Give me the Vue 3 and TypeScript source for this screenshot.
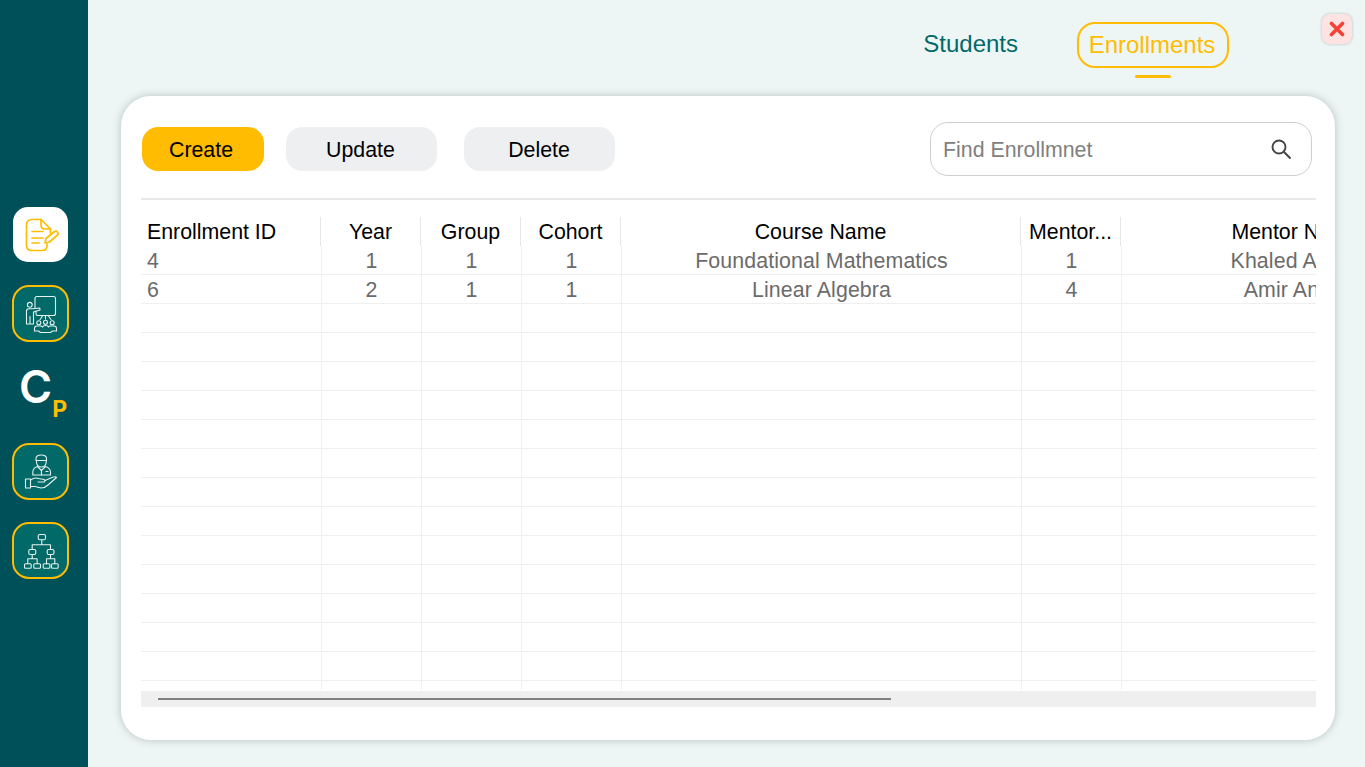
<script setup lang="ts">
interface Column {
  label: string
  width: number
  start?: boolean
}

const columns: Column[] = [
  { label: 'Enrollment ID', width: 180, start: true },
  { label: 'Year', width: 100 },
  { label: 'Group', width: 100 },
  { label: 'Cohort', width: 100 },
  { label: 'Course Name', width: 400 },
  { label: 'Mentor...', width: 100 },
  { label: 'Mentor Name', width: 350 }
]

const enrollments: string[][] = [
  ['4', '1', '1', '1', 'Foundational Mathematics', '1', 'Khaled Anwar'],
  ['6', '2', '1', '1', 'Linear Algebra', '4', 'Amir Anbar']
]

// the grid shows empty lines under the data, the last one cut off
const rows: string[][] = [
  ...enrollments,
  ...Array.from({ length: 14 }, () => columns.map(() => ''))
]
</script>

<template>
  <div class="page">
    <aside class="sidebar">
      <button type="button" class="side-btn side-btn--active">
        <svg class="side-icon" viewBox="0 0 40 40" fill="none" stroke="#ffbc00" stroke-width="1.7" stroke-linecap="round" stroke-linejoin="round">
          <path d="M20 4.500H11Q5.500 4.500 5.500 10V30.500Q5.500 35.500 11 35.500H21Q26 35.500 26 31V29" />
          <path d="M20 4.500L29.500 14V18.500" />
          <path d="M20 4.500V10Q20 14 24 14H29.500" />
          <path d="M11 16.500H22M11 23H22M11 28H18" />
          <path d="M24 28L25 23.500L33.500 16.500Q35 15.500 36.500 17Q37.800 18.500 36.500 20L28.500 27Z" />
        </svg>
      </button>
      <button type="button" class="side-btn">
        <svg class="side-icon" viewBox="0 0 40 40" fill="none" stroke="#e6f2f0" stroke-width="1.1" stroke-linecap="round" stroke-linejoin="round">
          <path d="M14 13.500V4.500Q14 2.500 16 2.500H32.500Q34.500 2.500 34.500 4.500V19.500Q34.500 21.500 32.500 21.500H16.500Q15 21.500 15 19.500V17" />
          <circle cx="8.800" cy="10.800" r="2.400" />
          <path d="M5.500 30V17Q5.500 14.800 7.800 14.800H11.500L18.800 14L19 16L12.500 18V30H9V22.500V30H5.500" />
          <path d="M24.500 22V25M21.500 22L19 25.500M27.500 22L30 25.500" />
          <circle cx="17.800" cy="28.800" r="2" />
          <circle cx="24.500" cy="28.200" r="2" />
          <circle cx="31.200" cy="28.800" r="2" />
          <path d="M13.500 37V34.500Q13.500 32 16 32H19.500Q21 32 21.500 33Q22 31.500 24.500 31.500Q27 31.500 27.500 33Q28 32 29.500 32H33Q35.500 32 35.500 34.500V37H31.500L29.500 38.500H19.500L17.500 37Z" />
        </svg>
      </button>
      <div class="logo">
        <span class="logo__c">C</span>
        <span class="logo__p">P</span>
      </div>
      <button type="button" class="side-btn">
        <svg class="side-icon" viewBox="0 0 40 40" fill="none" stroke="#e6f2f0" stroke-width="1.1" stroke-linecap="round" stroke-linejoin="round">
          <path d="M15 7Q14.800 3 20.200 3Q25.800 3 25.500 7V8.500H15Z" />
          <path d="M15.500 8.500V10.500Q16.200 15 20.400 15Q24.500 15 25.200 10.500V8.500" />
          <path d="M16.500 14.500Q11.800 16 11.800 20.500V23H29.500V20.500Q29.500 16 24.500 14.500L20.400 18.500Z" />
          <path d="M20.400 18.500V23M25 19.500H27" />
          <path d="M4.500 27H9.500V36H4.500Z" />
          <path d="M9.500 28Q14 25 17.500 26.500L23 27.500Q25 28.500 23 30H17" />
          <path d="M24 28.500L31 25.500Q34.500 24 35.500 25.500L27 33Q24 36 20 36L14 34.500H9.500" />
        </svg>
      </button>
      <button type="button" class="side-btn side-btn--last">
        <svg class="side-icon" viewBox="0 0 40 40" fill="none" stroke="#e6f2f0" stroke-width="1.1" stroke-linecap="round" stroke-linejoin="round">
          <rect x="17.200" y="3.500" width="7.300" height="5.300" rx="1.500" />
          <rect x="7.800" y="18.500" width="7" height="5" rx="1.500" />
          <rect x="26.200" y="18.500" width="6.800" height="5" rx="1.500" />
          <rect x="3.500" y="32.800" width="6.700" height="4.500" rx="1" />
          <rect x="12.800" y="32.800" width="6.700" height="4.500" rx="1" />
          <rect x="22.200" y="32.800" width="6.700" height="4.500" rx="1" />
          <rect x="30.500" y="32.800" width="6.700" height="4.500" rx="1" />
          <path d="M20.800 8.800V13.800M11.200 18.500V13.800H29.500V18.500" />
          <path d="M11.200 23.500V27.800M6.800 32.800V27.800H16.100V32.800" />
          <path d="M29.500 23.500V27.800M25.500 32.800V27.800H33.800V32.800" />
        </svg>
      </button>
    </aside>

    <main class="content">
      <nav class="tabs">
        <div class="tab">
          <span class="tab__label">Students</span>
        </div>
        <div class="tab tab--active">
          <span class="tab__label">Enrollments</span>
          <span class="tab__bar"></span>
        </div>
      </nav>

      <button type="button" class="close" aria-label="Close">
        <svg viewBox="0 0 16 16" width="16" height="16" fill="none" stroke="#f44336" stroke-width="3.600" stroke-linecap="round">
          <path d="M2.500 2.500L13.500 13.500M13.500 2.500L2.500 13.500" />
        </svg>
      </button>

      <section class="card">
        <div class="toolbar">
          <div class="actions">
            <button type="button" class="action action--create">Create</button>
            <button type="button" class="action action--update">Update</button>
            <button type="button" class="action action--delete">Delete</button>
          </div>
          <label class="search">
            <input class="search__input" type="text" placeholder="Find Enrollmnet" />
            <svg viewBox="0 0 24 24" width="24" height="24" fill="none" stroke="#444" stroke-width="1.900" stroke-linecap="round">
              <circle cx="10" cy="10" r="6.500" />
              <path d="M15 15L21 21" />
            </svg>
          </label>
        </div>

        <div class="grid">
          <div class="grid__head">
            <div
              v-for="col in columns"
              :key="col.label"
              class="head-cell"
              :class="{ 'head-cell--start': col.start }"
              :style="{ width: col.width + 'px' }"
            >
              {{ col.label }}
            </div>
          </div>
          <div class="grid__body">
            <div v-for="(row, r) in rows" :key="r" class="grid__row">
              <div
                v-for="(col, c) in columns"
                :key="col.label"
                class="cell"
                :class="{ 'cell--start': col.start }"
                :style="{ width: col.width + 'px' }"
              >
                {{ row[c] }}
              </div>
            </div>
          </div>
          <div class="scrollbar">
            <div class="scrollbar__thumb"></div>
          </div>
        </div>
      </section>
    </main>
  </div>
</template>

<style scoped>
.page {
  display: flex;
  height: 767px;
  font-family: "Liberation Sans", Arial, sans-serif;
}

.sidebar {
  flex: 0 0 88px;
  display: flex;
  flex-direction: column;
  align-items: center;
  padding: 207px 7px 0 0;
  box-sizing: border-box;
  background: #00505a;
}

.side-btn {
  display: flex;
  align-items: center;
  justify-content: center;
  flex: 0 0 57px;
  width: 57px;
  padding: 0;
  border: 2px solid #ffbc00;
  border-radius: 17px;
  background: #016967;
}

.side-btn--last {
  margin-top: 22px;
}

.side-btn--active {
  flex: 0 0 55px;
  width: 55px;
  margin-bottom: 23px;
  border: none;
  border-radius: 15px;
  background: #fff;
}

.side-icon {
  flex: none;
  width: 40px;
  height: 40px;
}

.logo {
  flex: 0 0 101px;
  display: flex;
  align-items: flex-start;
  justify-content: center;
  box-sizing: border-box;
  width: 81px;
  padding: 21px 0 0 5px;
  font-family: Inter, sans-serif;
  font-weight: 600;
}

.logo__c {
  color: #fff;
  font-size: 45px;
  line-height: 47px;
}

.logo__p {
  margin-top: 32px;
  color: #ffbc00;
  font-size: 23px;
  font-weight: 700;
  line-height: 28px;
}

.content {
  position: relative;
  flex: 1;
  display: flex;
  flex-direction: column;
  background: #eef6f5;
}

.tabs {
  flex: 0 0 96px;
  display: flex;
  align-items: flex-start;
  justify-content: flex-end;
  gap: 59px;
  box-sizing: border-box;
  padding: 22px 136px 0 0;
}

.tab {
  display: flex;
  flex-direction: column;
  align-items: center;
  gap: 7px;
}

.tab__label {
  font-size: 24px;
  line-height: 44px;
  color: #00696b;
}

.tab--active .tab__label {
  box-sizing: border-box;
  width: 152px;
  height: 46px;
  padding-right: 2px;
  border: 2px solid #ffbc00;
  border-radius: 18px;
  color: #ffbc00;
  line-height: 42px;
  text-align: center;
}

.tab__bar {
  width: 36px;
  height: 3px;
  border-radius: 2px;
  background: #ffbc00;
}

.close {
  position: absolute;
  top: 14px;
  right: 13px;
  display: flex;
  align-items: center;
  justify-content: center;
  width: 30px;
  height: 30px;
  padding: 0;
  border: none;
  border-radius: 8px;
  background: #fde3e1;
  box-shadow: 0 0 3px rgba(0, 0, 0, 0.25);
}

.card {
  box-sizing: border-box;
  width: 1214px;
  height: 644px;
  margin-left: 33px;
  padding: 26px 19px 0 20px;
  border-radius: 30px;
  background: #fff;
  box-shadow: 0 0 8px rgba(0, 40, 40, 0.25);
}

.toolbar {
  display: flex;
  align-items: center;
  justify-content: space-between;
  padding: 0 4px 22px 1px;
  border-bottom: 2px solid #e8e8e8;
}

.actions {
  display: flex;
}

.action {
  height: 44px;
  padding: 2px 0 0;
  border: none;
  border-radius: 16px;
  background: #eeeff1;
  color: #000;
  font-family: inherit;
  font-size: 21.33px;
}

.action--create {
  width: 122px;
  margin-right: 22px;
  padding-right: 4px;
  background: #ffbc00;
}

.action--update {
  width: 151px;
  margin-right: 27px;
  padding-right: 2px;
}

.action--delete {
  width: 151px;
  padding-right: 1px;
}

.search {
  display: flex;
  align-items: center;
  box-sizing: border-box;
  width: 382px;
  height: 54px;
  padding: 0 18px 0 12px;
  border: 1px solid #cfcfcf;
  border-radius: 18px;
}

.search__input {
  flex: 1;
  min-width: 0;
  padding: 2px 0 0;
  border: none;
  outline: none;
  background: none;
  font-family: inherit;
  font-size: 21.33px;
}

.search__input::placeholder {
  color: #808080;
}

.grid {
  width: 1175px;
  margin-top: 17px;
  overflow: hidden;
}

.grid__head {
  display: flex;
  height: 29px;
}

.head-cell {
  flex: none;
  box-sizing: border-box;
  border-right: 1px solid #e6e6e6;
  color: #000;
  font-size: 21.33px;
  line-height: 31px;
  text-align: center;
  white-space: nowrap;
}

.head-cell:last-child {
  border-right: none;
}

.head-cell--start {
  padding-left: 6px;
  text-align: left;
}

.grid__body {
  height: 444px;
  overflow: hidden;
}

.grid__row {
  display: flex;
  box-sizing: border-box;
  height: 29px;
  padding-left: 1px;
  border-bottom: 1px solid #efefef;
}

.cell {
  flex: none;
  box-sizing: border-box;
  border-right: 1px solid #efefef;
  color: #6b6b6b;
  font-size: 21.33px;
  letter-spacing: 0.1px;
  line-height: 31px;
  text-align: center;
  white-space: nowrap;
}

.cell:last-child {
  border-right: none;
}

.cell--start {
  padding-left: 5px;
  text-align: left;
}

.scrollbar {
  display: flex;
  align-items: center;
  height: 16px;
  margin-top: 1px;
  padding-left: 17px;
  background: #efefef;
}

.scrollbar__thumb {
  width: 733px;
  height: 2px;
  background: #808080;
}
</style>

<style>
body {
  overflow: hidden;
}
</style>
